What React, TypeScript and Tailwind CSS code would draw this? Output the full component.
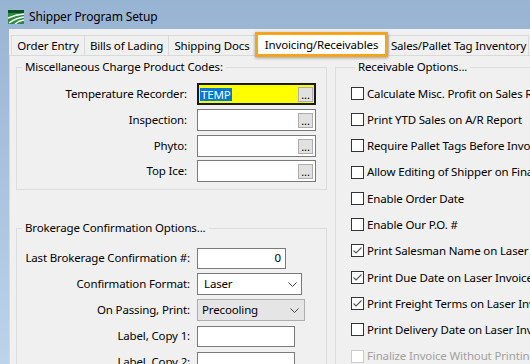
import React from "react";

function AppIcon() {
  return (
    <svg width="16" height="14" viewBox="0 0 16 14" className="shrink-0">
      <rect x="0" y="0" width="16" height="14" fill="#2b8a3f" />
      <rect x="0" y="0" width="16" height="3" fill="#0c4f22" />
      <path d="M0 8 Q8 4.5 16 4" stroke="#fff" strokeWidth="1.4" fill="none" />
      <path d="M1 13 Q8 8 16 7" stroke="#fff" strokeWidth="1.4" fill="none" />
      <path d="M7 14 Q11 10.5 16 10" stroke="#fff" strokeWidth="1.4" fill="none" />
    </svg>
  );
}

function Tab({ label, w, last }: { label: string; w: string; last?: boolean }) {
  return (
    <div
      className={`${w} h-[20px] flex items-center justify-center border-t border-l border-[#d9d9d9] bg-[#f0f0f0] whitespace-nowrap ${
        last ? "border-r" : ""
      }`}
    >
      {label}
    </div>
  );
}

function DotsButton() {
  return (
    <div className="w-[15px] h-[15px] bg-[#e1e1e1] border border-[#adadad] flex items-end justify-center leading-[10px] text-[11px] pb-[1px]">
      ...
    </div>
  );
}

function LookupBox({ focused }: { focused?: boolean }) {
  if (focused) {
    return (
      <div className="w-[119px] h-[22px] border-2 border-[#1a1a1a] bg-[#ffff00] flex items-center pr-[1px]">
        <span className="ml-[1px] bg-[#0078d7] text-white leading-[13px] px-[1px]">TEMP</span>
        <div className="flex-1" />
        <DotsButton />
      </div>
    );
  }
  return (
    <div className="w-[119px] h-[22px] border border-[#7a7a7a] bg-white flex items-center justify-end pr-[2px]">
      <DotsButton />
    </div>
  );
}

function Chevron() {
  return (
    <svg width="9" height="5" viewBox="0 0 9 5">
      <path d="M0.5 0.5 L4.5 4.5 L8.5 0.5" stroke="#444" strokeWidth="1" fill="none" />
    </svg>
  );
}

function Check({ label, checked, disabled }: { label: string; checked?: boolean; disabled?: boolean }) {
  return (
    <div className="h-[26.3px] flex items-center whitespace-nowrap">
      <div
        className={`w-[13px] h-[13px] border bg-white shrink-0 ${disabled ? "border-[#cccccc]" : "border-[#333333]"}`}
      >
        {checked && (
          <svg width="11" height="11" viewBox="0 0 11 11">
            <path d="M1.5 5.5 L4 8 L9.5 2.5" stroke="#555" strokeWidth="1.1" fill="none" />
          </svg>
        )}
      </div>
      <span className={`ml-[3px] ${disabled ? "text-[#a0a0a0]" : ""}`}>{label}</span>
    </div>
  );
}

const receivables = [
  { label: "Calculate Misc. Profit on Sales Report" },
  { label: "Print YTD Sales on A/R Report" },
  { label: "Require Pallet Tags Before Invoicing" },
  { label: "Allow Editing of Shipper on Finalized Invoices" },
  { label: "Enable Order Date" },
  { label: "Enable Our P.O. #" },
  { label: "Print Salesman Name on Laser Invoice", checked: true },
  { label: "Print Due Date on Laser Invoices", checked: true },
  { label: "Print Freight Terms on Laser Invoice", checked: true },
  { label: "Print Delivery Date on Laser Invoice" },
  { label: "Finalize Invoice Without Printing", disabled: true },
];

export default function App() {
  return (
    <div className="w-[530px] h-[364px] overflow-hidden bg-gradient-to-b from-[#98b4d3] to-[#bcd3ea] flex flex-col text-[11.5px] tracking-[-0.15px] text-black font-['Noto_Sans',sans-serif]">
      <div className="h-[29px] shrink-0 flex items-center pl-[8px] pt-[4px] gap-[5px] text-[12px]">
        <AppIcon />
        <span>Shipper Program Setup</span>
      </div>

      <div className="flex-1 flex pl-[9px] min-h-0">
        <div className="flex-1 min-w-0 bg-[#f0f0f0] flex flex-col pt-[6px]">
          <div className="flex h-[20px] ml-[2px] shrink-0">
            <Tab label="Order Entry" w="w-[73px]" />
            <Tab label="Bills of Lading" w="w-[84px]" />
            <Tab label="Shipping Docs" w="w-[87px]" />
            <div className="relative z-10 w-[133px] h-[25px] -mt-[3px] bg-white border-[3px] border-[#f5a51d] shadow-[0_1px_3px_rgba(0,0,0,0.35)] flex items-center justify-center whitespace-nowrap">
              Invoicing/Receivables
            </div>
            <Tab label="Sales/Pallet Tag Inventory" w="w-[141px]" last />
          </div>

          <div className="flex-1 border-t border-l border-[#d9d9d9] flex pl-[6px]">
            <div className="w-[311px] shrink-0 flex flex-col">
              <fieldset className="mt-[3px] border border-[#dcdcdc] pt-[6px] pb-[6px]">
                <legend className="ml-[5px] px-[3px] leading-[16px]">Miscellaneous Charge Product Codes:</legend>
                {[
                  { label: "Temperature Recorder:", focused: true },
                  { label: "Inspection:" },
                  { label: "Phyto:" },
                  { label: "Top Ice:" },
                ].map((r) => (
                  <div key={r.label} className="h-[26px] flex items-center first:-mt-[2px] last:h-[24px]">
                    <span className="w-[170px] text-right">{r.label}</span>
                    <div className="ml-[10px]">
                      <LookupBox focused={r.focused} />
                    </div>
                  </div>
                ))}
              </fieldset>

              <fieldset className="mt-[30px] border border-[#dcdcdc] pt-[9px] pb-[6px]">
                <legend className="ml-[5px] px-[3px] leading-[16px]">Brokerage Confirmation Options...</legend>
                <div className="h-[26px] flex items-center">
                  <span className="w-[173px] text-right">Last Brokerage Confirmation #:</span>
                  <div className="ml-[7px] w-[89px] h-[21px] border border-[#7a7a7a] bg-white flex items-center justify-end pr-[4px]">
                    0
                  </div>
                </div>
                <div className="h-[26px] flex items-center">
                  <span className="w-[173px] text-right">Confirmation Format:</span>
                  <div className="ml-[7px] w-[105px] h-[22px] border border-[#7a7a7a] bg-white flex items-center justify-between pl-[6px] pr-[4px]">
                    <span>Laser</span>
                    <Chevron />
                  </div>
                </div>
                <div className="h-[26px] flex items-center">
                  <span className="w-[173px] text-right">On Passing, Print:</span>
                  <div className="ml-[7px] w-[108px] h-[22px] border border-[#adadad] bg-[#e5e5e5] flex items-center justify-between pl-[4px] pr-[5px]">
                    <span>Precooling</span>
                    <Chevron />
                  </div>
                </div>
                <div className="h-[26px] flex items-center">
                  <span className="w-[173px] text-right">Label, Copy 1:</span>
                  <div className="ml-[7px] w-[98px] h-[21px] border border-[#7a7a7a] bg-white" />
                </div>
                <div className="h-[26px] flex items-center">
                  <span className="w-[173px] text-right">Label, Copy 2:</span>
                  <div className="ml-[7px] w-[98px] h-[21px] border border-[#7a7a7a] bg-white" />
                </div>
              </fieldset>
            </div>

            <div className="ml-[8px] w-[300px] shrink-0">
              <fieldset className="mt-[3px] border border-[#dcdcdc] pl-[15px] pt-[5px] pb-[6px]">
                <legend className="ml-[4px] px-[3px] leading-[16px]">Receivable Options...</legend>
                {receivables.map((r) => (
                  <Check key={r.label} label={r.label} checked={r.checked} disabled={r.disabled} />
                ))}
              </fieldset>
            </div>
          </div>
        </div>
      </div>
    </div>
  );
}
